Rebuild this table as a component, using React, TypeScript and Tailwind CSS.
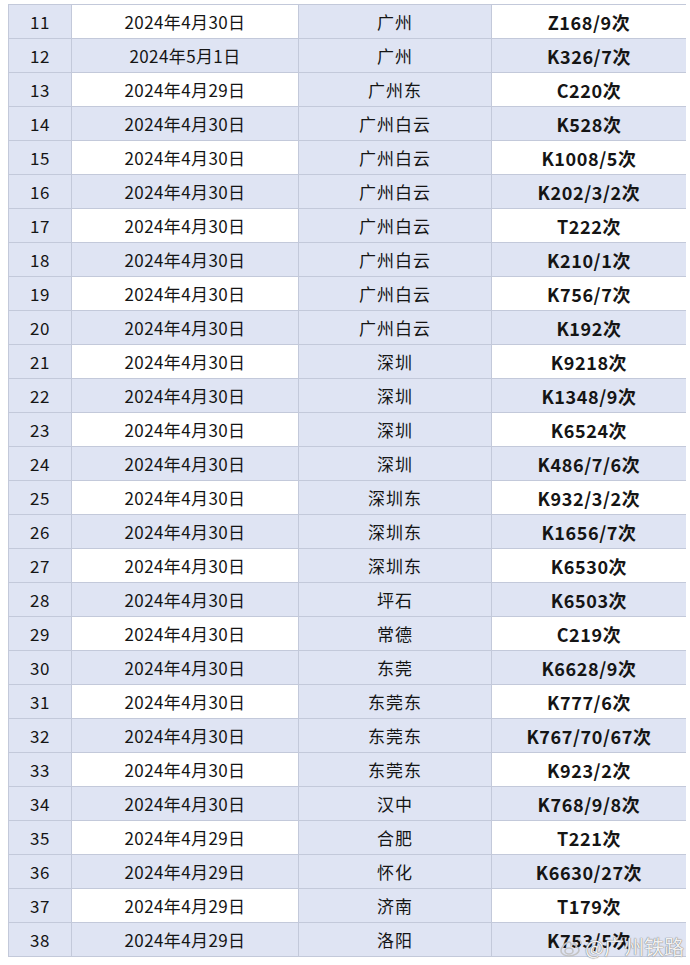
import React from "react"

const rows: [number, string, string, string][] = [
  [11, "2024年4月30日", "广州", "Z168/9次"],
  [12, "2024年5月1日", "广州", "K326/7次"],
  [13, "2024年4月29日", "广州东", "C220次"],
  [14, "2024年4月30日", "广州白云", "K528次"],
  [15, "2024年4月30日", "广州白云", "K1008/5次"],
  [16, "2024年4月30日", "广州白云", "K202/3/2次"],
  [17, "2024年4月30日", "广州白云", "T222次"],
  [18, "2024年4月30日", "广州白云", "K210/1次"],
  [19, "2024年4月30日", "广州白云", "K756/7次"],
  [20, "2024年4月30日", "广州白云", "K192次"],
  [21, "2024年4月30日", "深圳", "K9218次"],
  [22, "2024年4月30日", "深圳", "K1348/9次"],
  [23, "2024年4月30日", "深圳", "K6524次"],
  [24, "2024年4月30日", "深圳", "K486/7/6次"],
  [25, "2024年4月30日", "深圳东", "K932/3/2次"],
  [26, "2024年4月30日", "深圳东", "K1656/7次"],
  [27, "2024年4月30日", "深圳东", "K6530次"],
  [28, "2024年4月30日", "坪石", "K6503次"],
  [29, "2024年4月30日", "常德", "C219次"],
  [30, "2024年4月30日", "东莞", "K6628/9次"],
  [31, "2024年4月30日", "东莞东", "K777/6次"],
  [32, "2024年4月30日", "东莞东", "K767/70/67次"],
  [33, "2024年4月30日", "东莞东", "K923/2次"],
  [34, "2024年4月30日", "汉中", "K768/9/8次"],
  [35, "2024年4月29日", "合肥", "T221次"],
  [36, "2024年4月29日", "怀化", "K6630/27次"],
  [37, "2024年4月29日", "济南", "T179次"],
  [38, "2024年4月29日", "洛阳", "K753/5次"],
]

const font = { fontFamily: '"Noto Sans CJK SC", "Noto Sans", sans-serif' }

export default function App() {
  return (
    <div className="relative h-[965px] w-[690px] bg-white pl-2 pt-1 text-[#151515]" style={font}>
      <div className="w-[678px] border-b border-r border-[#c3c9da]">
        {rows.map(([no, date, station, train]) => {
          const odd = no % 2 === 1
          const stripe = odd ? "bg-white" : "bg-[#dfe4f3]"
          return (
            <div key={no} className="grid h-[34px] grid-cols-[63px_227px_193px_195px] text-[17px] leading-none">
              <div className="flex items-center justify-center border-l border-t border-[#c3c9da] bg-[#dfe4f3] tracking-[0.5px]">{no}</div>
              <div className={`flex items-center justify-center border-l border-t border-[#c3c9da] tracking-[0.4px] ${stripe}`}>{date}</div>
              <div className="flex items-center justify-center border-l border-t border-[#c3c9da] bg-[#dfe4f3] tracking-[1px]">{station}</div>
              <div className={`flex items-center justify-center border-l border-t border-[#c3c9da] text-[18px] font-bold tracking-[0.6px] ${stripe}`}>{train}</div>
            </div>
          )
        })}
      </div>

      <div className="absolute bottom-[8px] right-[6px] flex items-center gap-[2px] text-[20px] leading-none text-white/90 [text-shadow:0_0_1px_#777,0_0_1px_#777]">
        <svg width="24" height="20" viewBox="0 0 24 20" fill="none" stroke="#c4c4c4" strokeWidth="1.6">
          <path d="M10 5c-4 1-8 5-8 9 0 3 4 5 8 5 5 0 10-3 10-6 0-2-2-3-3-3 1-2 0-4-3-3-1 0-2 1-2 1 0-2-1-3-2-3z" />
          <ellipse cx="10" cy="14" rx="4" ry="3" />
          <path d="M17 2c3 0 5 2 5 5" />
        </svg>
        <span>@广州铁路</span>
      </div>
    </div>
  )
}
